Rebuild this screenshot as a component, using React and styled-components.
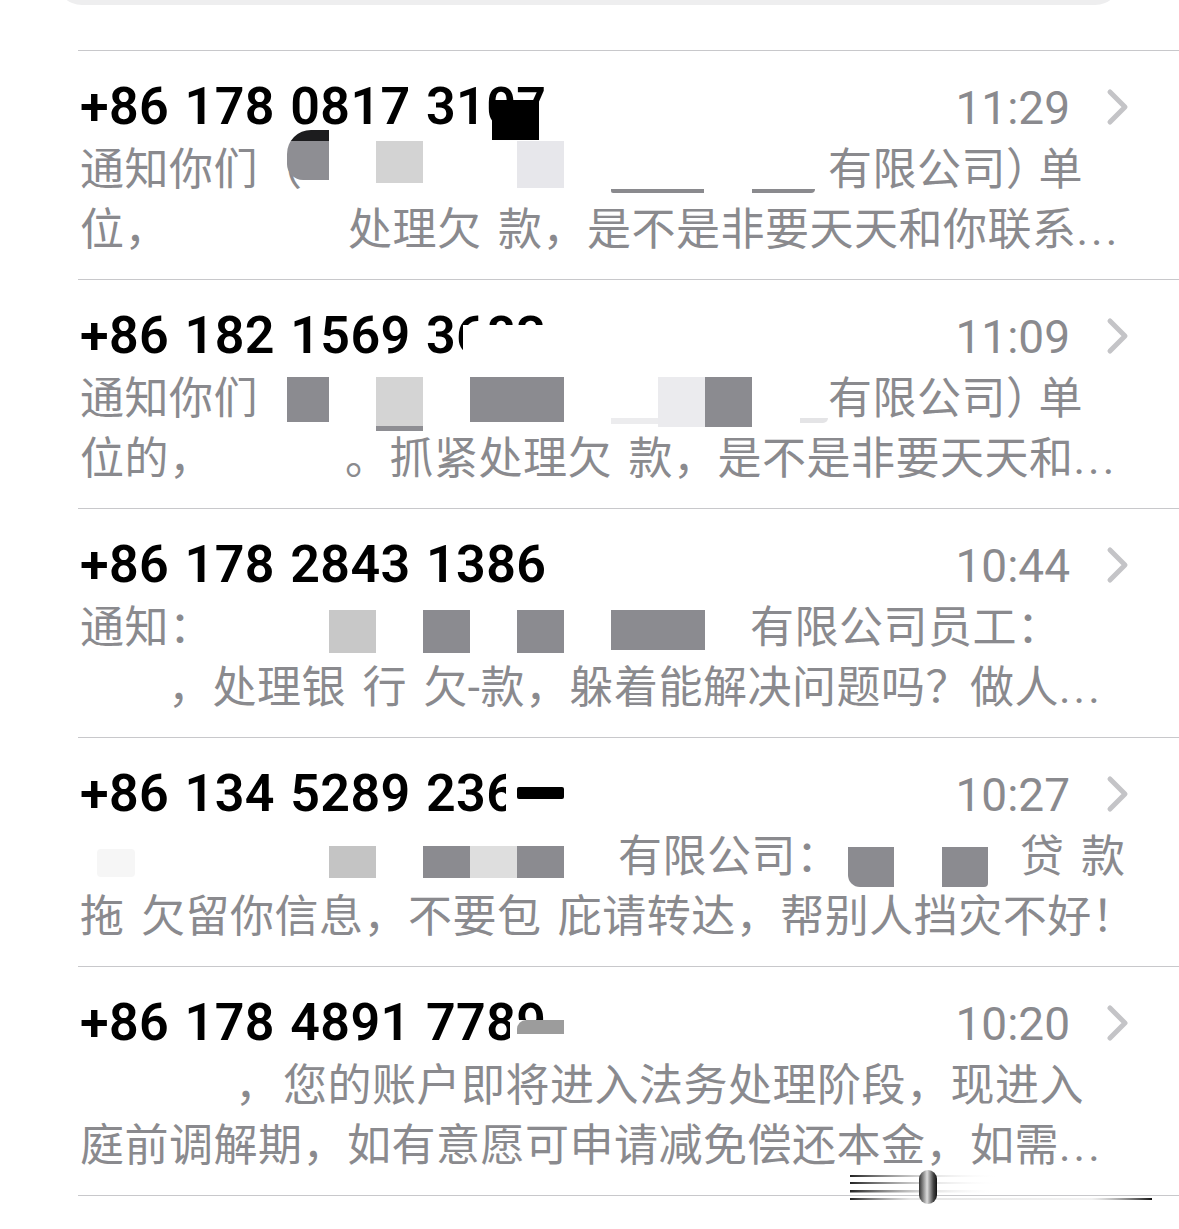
import React from 'react';
import styled, { createGlobalStyle } from 'styled-components';

const GlobalStyle = createGlobalStyle`
  html, body {
    margin: 0;
    padding: 0;
    background: #ffffff;
  }
  body {
    font-family: Roboto, "Noto Sans CJK SC", sans-serif;
  }
`;

const Screen = styled.div`
  position: relative;
  width: 1179px;
  height: 1229px;
  overflow: hidden;
  background: #ffffff;
`;

const SearchStrip = styled.div`
  height: 5px;
  overflow: hidden;
  display: flex;
  align-items: flex-end;
  padding: 0 58px 0 56px;
  margin-bottom: 45px;
`;

const SearchField = styled.div`
  flex: 1 0 auto;
  height: 60px;
  border-radius: 26px;
  background: #eeeeef;
`;

const List = styled.div`
  margin-left: 78px;
  border-bottom: 1px solid #c8c8cb;
`;

const Row = styled.div`
  box-sizing: border-box;
  height: 229px;
  border-top: 1px solid #c8c8cb;
  padding: 26px 49px 22px 2px;
`;

const Header = styled.div`
  display: flex;
  align-items: baseline;
  height: 60px;
  line-height: 60px;
`;

const Phone = styled.div`
  position: relative;
  flex: 1;
  font-size: 52px;
  font-weight: 600;
  color: #000000;
  letter-spacing: 0.4px;
  word-spacing: 2px;
  white-space: pre;
`;

const Mask = styled.span`
  position: absolute;
  left: ${p => p.$x}px;
  top: ${p => p.$y}px;
  width: ${p => p.$w}px;
  height: ${p => p.$h}px;
  background: ${p => p.$c};
  border-radius: ${p => p.$r || '0'};
`;

const Time = styled.div`
  font-size: 46px;
  color: #8a8a8e;
`;

const Chevron = styled.svg`
  flex: none;
  align-self: center;
  margin-left: 36px;
`;

const Line = styled.div`
  display: flex;
  align-items: flex-start;
  height: 60px;
  font-size: 44px;
  color: #8a8a8e;
  white-space: pre;
  letter-spacing: 0.5px;
  word-spacing: 5px;
`;

const Text = styled.span`
  flex: none;
  height: 60px;
  line-height: 66px;
  ${p => (p.$w ? `width: ${p.$w}px;` : '')}
`;

const Gap = styled.span`
  flex: none;
  width: ${p => p.$w}px;
`;

const Cell = styled.span`
  flex: none;
  width: ${p => p.$w}px;
  height: ${p => p.$h}px;
  margin-top: ${p => p.$top}px;
  background: ${p => p.$c};
  border-radius: ${p => p.$r || '0'};
`;

const Halt = styled.span`
  font-feature-settings: "halt";
  margin-right: 10px;
`;

const Dots = styled.span`
  font-family: Roboto, sans-serif;
  letter-spacing: 3px;
`;

const Watermark = styled.svg`
  position: absolute;
  left: 846px;
  top: 1166px;
`;

const DARK = '#8b8b90';

const company = <>有限公司<Halt>）</Halt>单</>;
const more = (s) => <>{s}<Dots>...</Dots></>;

const rows = [
  {
    phone: '+86 178 0817 3107',
    time: '11:29',
    masks: [{ x: 412, y: 23, w: 47, h: 40, c: '#000000' }],
    lines: [
      [
        ['t', '通知你们（', 207],
        ['c', 42, -7, 50, 'linear-gradient(#1c1c1e 0 22%, #8e8e93 22%)', '24px 0 0 16px'],
        ['g', 47],
        ['c', 47, 4, 42, '#d3d3d3'],
        ['g', 94],
        ['c', 47, 4, 47, '#e7e7eb'],
        ['g', 47],
        ['c', 93, 52, 4, '#8a8a8e', '0 0 0 2px'],
        ['g', 48],
        ['c', 63, 52, 4, '#8a8a8e', '0 0 8px 0'],
        ['g', 13],
        ['t', company],
      ],
      [
        ['t', '位，', 268],
        ['t', more('处理欠 款，是不是非要天天和你联系')],
      ],
    ],
  },
  {
    phone: '+86 182 1569 3683',
    time: '11:09',
    masks: [{ x: 383, y: 19, w: 95, h: 45, c: '#ffffff' }],
    lines: [
      [
        ['t', '通知你们', 207],
        ['c', 42, 11, 45, DARK],
        ['g', 47],
        ['c', 47, 11, 54, 'linear-gradient(#d4d4d4 0 49px, #8e8e93 49px)'],
        ['g', 47],
        ['c', 94, 11, 45, DARK],
        ['g', 47],
        ['c', 47, 52, 6, '#ececee'],
        ['c', 47, 11, 50, '#ebebee'],
        ['c', 47, 11, 50, DARK],
        ['g', 48],
        ['c', 28, 52, 5, '#e4e4e6', '0 0 10px 0'],
        ['t', company],
      ],
      [
        ['t', '位的，', 265],
        ['t', more('。抓紧处理欠 款，是不是非要天天和')],
      ],
    ],
  },
  {
    phone: '+86 178 2843 1386',
    time: '10:44',
    masks: [],
    lines: [
      [
        ['t', '通知：', 249],
        ['c', 47, 15, 43, '#c8c8c8'],
        ['g', 47],
        ['c', 47, 15, 43, DARK],
        ['g', 47],
        ['c', 47, 15, 43, DARK],
        ['g', 47],
        ['c', 94, 15, 40, DARK],
        ['g', 45],
        ['t', '有限公司员工：'],
      ],
      [
        ['g', 88],
        ['t', more('，处理银 行 欠-款，躲着能解决问题吗？做人')],
      ],
    ],
  },
  {
    phone: '+86 134 5289 2361',
    time: '10:27',
    masks: [
      { x: 426, y: 0, w: 60, h: 60, c: '#ffffff' },
      { x: 437, y: 23, w: 47, h: 12, c: '#000000', r: '2px' },
    ],
    lines: [
      [
        ['g', 17],
        ['c', 38, 25, 28, '#f6f6f6', '4px'],
        ['g', 194],
        ['c', 47, 22, 32, '#c4c4c4'],
        ['g', 47],
        ['c', 47, 22, 32, DARK],
        ['c', 47, 22, 32, '#dedede'],
        ['c', 47, 22, 32, DARK],
        ['g', 54],
        ['t', '有限公司：', 230],
        ['c', 46, 23, 40, DARK, '0 0 0 12px'],
        ['g', 48],
        ['c', 46, 23, 40, DARK, '0 0 4px 0'],
        ['g', 32],
        ['t', '贷 款'],
      ],
      [
        ['t', '拖 欠留你信息，不要包 庇请转达，帮别人挡灾不好！'],
      ],
    ],
  },
  {
    phone: '+86 178 4891 7789',
    time: '10:20',
    masks: [
      { x: 430, y: 27, w: 62, h: 33, c: '#ffffff' },
      { x: 437, y: 27, w: 47, h: 14, c: '#9c9c9c', r: '9px 0 0 0' },
    ],
    lines: [
      [
        ['g', 155],
        ['t', '，', 48],
        ['t', '您的账户即将进入法务处理阶段，现进入'],
      ],
      [
        ['t', more('庭前调解期，如有意愿可申请减免偿还本金，如需')],
      ],
    ],
  },
];

function Piece({ p }) {
  if (p[0] === 't') return <Text $w={p[2]}>{p[1]}</Text>;
  if (p[0] === 'g') return <Gap $w={p[1]} />;
  return <Cell $w={p[1]} $top={p[2]} $h={p[3]} $c={p[4]} $r={p[5]} />;
}

function Message({ row }) {
  return (
    <Row>
      <Header>
        <Phone>
          {row.phone}
          {row.masks.map((m, i) => (
            <Mask key={i} $x={m.x} $y={m.y} $w={m.w} $h={m.h} $c={m.c} $r={m.r} />
          ))}
        </Phone>
        <Time>{row.time}</Time>
        <Chevron width="24" height="38" viewBox="0 0 24 38">
          <polyline points="4,4 19,19 4,34" fill="none" stroke="#c4c4c7" strokeWidth="5"
            strokeLinecap="round" strokeLinejoin="round" />
        </Chevron>
      </Header>
      {row.lines.map((line, i) => (
        <Line key={i}>
          {line.map((p, j) => <Piece key={j} p={p} />)}
        </Line>
      ))}
    </Row>
  );
}

export default function App() {
  return (
    <Screen>
      <GlobalStyle />
      <SearchStrip>
        <SearchField />
      </SearchStrip>
      <List>
        {rows.map((row, i) => <Message key={i} row={row} />)}
      </List>
      <Watermark width="312" height="44" viewBox="0 0 312 44">
        <defs>
          <linearGradient id="fade" x1="0" x2="1">
            <stop offset="0" stopColor="#222" />
            <stop offset="0.5" stopColor="#bbb" stopOpacity="0.5" />
            <stop offset="1" stopColor="#fff" stopOpacity="0" />
          </linearGradient>
          <linearGradient id="fadeLong" x1="0" x2="1">
            <stop offset="0" stopColor="#222" />
            <stop offset="0.2" stopColor="#ccc" stopOpacity="0.5" />
            <stop offset="0.8" stopColor="#ddd" stopOpacity="0.4" />
            <stop offset="1" stopColor="#111" />
          </linearGradient>
          <linearGradient id="cap" x1="0" x2="1">
            <stop offset="0" stopColor="#333" />
            <stop offset="0.45" stopColor="#ddd" />
            <stop offset="0.8" stopColor="#444" />
            <stop offset="1" stopColor="#111" />
          </linearGradient>
        </defs>
        <rect x="4" y="9" width="150" height="2" fill="url(#fade)" />
        <rect x="4" y="16" width="150" height="2" fill="url(#fade)" />
        <rect x="4" y="24" width="150" height="2.5" fill="url(#fade)" />
        <rect x="4" y="32" width="302" height="2" fill="url(#fadeLong)" />
        <rect x="73" y="4" width="18" height="34" rx="9" fill="url(#cap)" />
      </Watermark>
    </Screen>
  );
}
